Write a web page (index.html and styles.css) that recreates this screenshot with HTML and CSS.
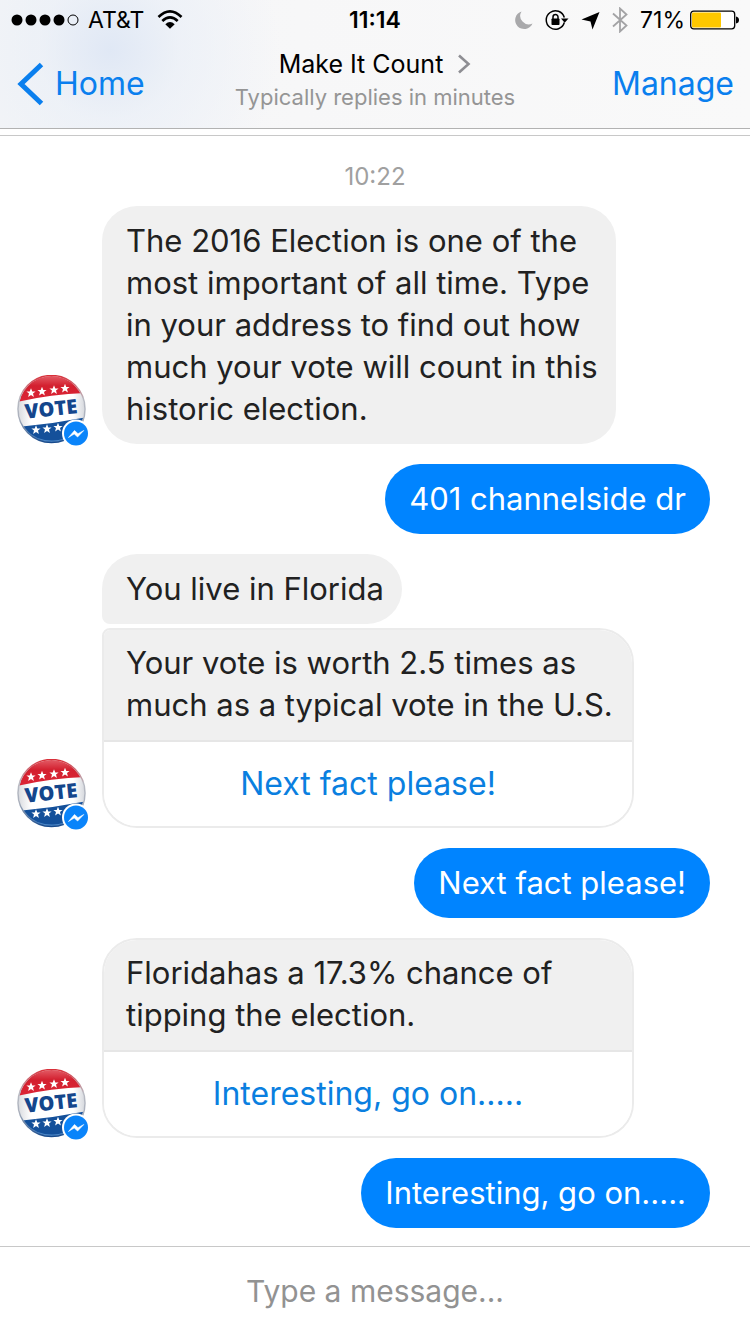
FILE: index.html
```html
<!DOCTYPE html>
<html lang="en">
<head>
<meta charset="utf-8">
<meta name="viewport" content="width=device-width, initial-scale=1">
<title>Make It Count</title>
<link rel="stylesheet" href="styles.css">
</head>
<body>
<svg class="symbols" aria-hidden="true">
  <defs>
    <linearGradient id="rim" x1="0" y1="0" x2="0" y2="1">
      <stop offset="0" stop-color="#d8303a"/>
      <stop offset=".35" stop-color="#b9bcc4"/>
      <stop offset=".65" stop-color="#a9afbb"/>
      <stop offset="1" stop-color="#174a8c"/>
    </linearGradient>
    <linearGradient id="red" x1="0" y1="0" x2="0" y2="1">
      <stop offset="0" stop-color="#e4606a"/>
      <stop offset=".4" stop-color="#d3202f"/>
      <stop offset="1" stop-color="#dc2435"/>
    </linearGradient>
    <linearGradient id="white" x1="0" y1="0" x2="1" y2="0">
      <stop offset="0" stop-color="#d5d7dc"/>
      <stop offset=".2" stop-color="#ffffff"/>
      <stop offset=".8" stop-color="#ffffff"/>
      <stop offset="1" stop-color="#cfd2d8"/>
    </linearGradient>
    <clipPath id="disc"><circle cx="34.500" cy="34" r="33"/></clipPath>
    <path id="star" d="M0-4.800 1.300-1.600 4.600-1.500 2 .6 2.900 3.900 0 2-2.900 3.900-2 .6-4.600-1.500-1.300-1.600Z"/>
    <g id="button-pin">
      <g clip-path="url(#disc)">
        <rect width="70" height="70" fill="url(#white)"/>
        <path d="M0 0H70V18Q35 19 0 27Z" fill="url(#red)"/>
        <path d="M0 52Q35 49 70 42V70H0Z" fill="#14509a"/>
        <path d="M8 55Q18 67 36 66.500 48 66 55 60" fill="none" stroke="#4b86c6" stroke-width="2"/>
        <g fill="#fff">
          <use href="#star" x="14" y="18"/>
          <use href="#star" x="25" y="16.500"/>
          <use href="#star" x="37" y="15"/>
          <use href="#star" x="48" y="13.500"/>
          <use href="#star" x="19" y="55"/>
          <use href="#star" x="30" y="54"/>
          <use href="#star" x="41" y="52.500"/>
        </g>
      </g>
      <circle cx="34.500" cy="34" r="33.500" fill="none" stroke="url(#rim)" stroke-width="1.500"/>
    </g>
    <g id="badge">
      <circle cx="59" cy="58.500" r="14" fill="#fff"/>
      <circle cx="59" cy="58.500" r="12" fill="#0a84fa"/>
      <path d="M51.500 62.500 57.500 55.500 61 58.700 66.800 55.500 60.600 62 57.200 58.900Z" fill="#fff" stroke="#fff" stroke-width=".6" stroke-linejoin="round"/>
    </g>
  </defs>
</svg>

<div class="screen">
  <header class="top">
    <div class="status">
      <div class="status-side">
        <svg class="icon" width="69" height="14" viewBox="0 0 69 14" role="img" aria-label="Signal">
          <circle cx="7" cy="7" r="5.500"/><circle cx="21" cy="7" r="5.500"/><circle cx="35" cy="7" r="5.500"/><circle cx="49" cy="7" r="5.500"/>
          <circle cx="63" cy="7" r="5" fill="none" stroke="#000"/>
        </svg>
        <span>AT&amp;T</span>
        <svg class="icon wifi" width="26" height="20" viewBox="0 0 26 20" role="img" aria-label="Wi-Fi">
          <g fill="none" stroke="#000" stroke-width="2.600">
            <path d="M1.500 7Q13-4.200 24.500 7"/>
            <path d="M5.300 11Q13 3.700 20.700 11"/>
          </g>
          <path d="M8.300 14.200Q13 10 17.700 14.200L13 18.800Z"/>
        </svg>
      </div>
      <time class="clock">11:14</time>
      <div class="status-side status-right">
        <svg class="icon" width="18" height="20" viewBox="0 0 18 20" role="img" aria-label="Do not disturb">
          <path d="M6.500 1.500A9 9 0 1 0 17.500 13.500 8.500 8.500 0 0 1 6.500 1.500Z" fill="#a9a9ab"/>
        </svg>
        <svg class="icon" width="24" height="22" viewBox="0 0 24 22" role="img" aria-label="Rotation lock">
          <path d="M19.300 13.500A9.200 9.200 0 1 1 19.300 8.500" fill="none" stroke="#000" stroke-width="1.500"/>
          <path d="M16 9.500H23.500L19.700 13.800Z"/>
          <rect x="6.500" y="9.500" width="8" height="6.500" rx=".8"/>
          <path d="M8 10V8A2.500 2.500 0 0 1 13 8V10" fill="none" stroke="#000" stroke-width="1.500"/>
        </svg>
        <svg class="icon" width="19" height="19" viewBox="0 0 19 19" role="img" aria-label="Location">
          <path d="M18.500 1 11.500 18.500 9.500 10.500 .5 8.500Z"/>
        </svg>
        <svg class="icon" width="16" height="26" viewBox="0 0 16 26" role="img" aria-label="Bluetooth">
          <path d="M1 6.500 14.500 18.500 8 24.500V1.500L14.500 7.500 1 19.500" fill="none" stroke="#a3a3a5" stroke-width="1.800"/>
        </svg>
        <span class="battery">71%
          <svg class="icon" width="50" height="20" viewBox="0 0 50 20" role="img" aria-label="Battery">
            <rect x=".7" y="1.200" width="44" height="17.600" rx="3" fill="#fff" stroke="#000" stroke-width="1.300"/>
            <rect x="2" y="2.500" width="29" height="15" rx="1" fill="#fec800"/>
            <path d="M46 6.500Q49 7 49 10T46 13.500Z"/>
          </svg>
        </span>
      </div>
    </div>
    <nav class="nav">
      <a class="nav-link" href="#home">
        <svg class="icon" width="28" height="44" viewBox="0 0 28 44" aria-hidden="true">
          <path d="M25.500 2.500 5 22 25.500 41.500" fill="none" stroke="#0a7fee" stroke-width="5"/>
        </svg>
        Home
      </a>
      <div class="heading">
        <h1 class="title">Make It Count
          <svg class="icon" width="14" height="20" viewBox="0 0 14 20" aria-hidden="true">
            <path d="M2 1.500 11.500 10 2 18.500" fill="none" stroke="#8e8e93" stroke-width="2.600"/>
          </svg>
        </h1>
        <p class="subtitle">Typically replies in minutes</p>
      </div>
      <a class="nav-link nav-end" href="#manage">Manage</a>
    </nav>
  </header>

  <main class="chat">
    <time class="stamp">10:22</time>

    <div class="row">
      <svg class="avatar" viewBox="0 0 74 72" role="img" aria-label="Make It Count">
        <use href="#button-pin"/>
        <text class="vote-text" x="34" y="41" transform="rotate(-6 34 34)" text-anchor="middle">VOTE</text>
        <use href="#badge"/>
      </svg>
      <p class="bubble">The 2016 Election is one of the most important of all time. Type in your address to find out how much your vote will count in this historic election.</p>
    </div>

    <p class="bubble sent">401 channelside dr</p>

    <div class="row">
      <svg class="avatar" viewBox="0 0 74 72" role="img" aria-label="Make It Count">
        <use href="#button-pin"/>
        <text class="vote-text" x="34" y="41" transform="rotate(-6 34 34)" text-anchor="middle">VOTE</text>
        <use href="#badge"/>
      </svg>
      <div class="stack">
        <p class="bubble first">You live in Florida</p>
        <div class="card joined">
          <p class="card-text">Your vote is worth 2.5 times as much as a typical vote in the U.S.</p>
          <button class="card-button" type="button">Next fact please!</button>
        </div>
      </div>
    </div>

    <p class="bubble sent">Next fact please!</p>

    <div class="row">
      <svg class="avatar" viewBox="0 0 74 72" role="img" aria-label="Make It Count">
        <use href="#button-pin"/>
        <text class="vote-text" x="34" y="41" transform="rotate(-6 34 34)" text-anchor="middle">VOTE</text>
        <use href="#badge"/>
      </svg>
      <div class="card">
        <p class="card-text">Floridahas a 17.3% chance of tipping the election.</p>
        <button class="card-button" type="button">Interesting, go on.....</button>
      </div>
    </div>

    <p class="bubble sent">Interesting, go on.....</p>
  </main>

  <footer class="composer">
    <input class="message" type="text" placeholder="Type a message..." aria-label="Message">
  </footer>
</div>
</body>
</html>
```

FILE: styles.css
```css
* { box-sizing: border-box; }

body {
  margin: 0;
  background: #fff;
  color: #212121;
  font-family: Inter, "Liberation Sans", sans-serif;
  font-size: 31px;
  line-height: 42px;
}

p, h1 { margin: 0; }

.symbols { position: absolute; width: 0; height: 0; }

.screen {
  min-height: 100vh;
  display: flex;
  flex-direction: column;
}

.icon { display: block; flex: none; }

/* Header */
.top {
  border-bottom: 1px solid #b2b2b2;
  background:
    radial-gradient(circle at 110px 50px, #e0e8f5 0, rgba(232, 238, 247, 0.6) 70px, rgba(247, 247, 248, 0) 170px),
    linear-gradient(90deg, #f4f5f7, #f7f7f8 40%, #f9f9f9);
}

.status {
  display: grid;
  grid-template-columns: 1fr auto 1fr;
  align-items: center;
  height: 40px;
  padding: 0 10px;
  color: #000;
  font-size: 23px;
  line-height: 40px;
}

.status-side { display: flex; align-items: center; gap: 9px; }
.wifi { margin-left: 4px; }
.status-right { justify-content: flex-end; gap: 12px; }
.clock { font-weight: 600; }
.battery { display: flex; align-items: center; gap: 5px; }

.nav {
  display: grid;
  grid-template-columns: 1fr auto 1fr;
  align-items: center;
  height: 88px;
  padding: 0 16px;
}

.nav-link {
  display: flex;
  align-items: center;
  gap: 11px;
  color: #0a7fee;
  font-size: 32px;
  text-decoration: none;
}

.nav-end { justify-content: flex-end; }

.heading { padding-bottom: 8px; text-align: center; }

.title {
  display: flex;
  justify-content: center;
  align-items: center;
  gap: 14px;
  color: #000;
  font-size: 25px;
  font-weight: 400;
  line-height: 34px;
}

.subtitle {
  color: #959595;
  font-size: 22px;
  line-height: 32px;
}

/* Conversation */
.chat {
  flex: 1;
  display: flex;
  flex-direction: column;
  gap: 20px;
  margin-top: 6px;
  padding: 26px 40px 18px 17px;
  border-top: 1px solid #c8c8c8;
}

.stamp {
  align-self: center;
  margin-bottom: -6px;
  padding-left: 23px;
  color: #a0a0a0;
  font-size: 24px;
  line-height: 30px;
}

.row {
  display: flex;
  align-items: flex-end;
  gap: 11px;
}

.avatar { flex: none; width: 74px; height: 72px; margin-bottom: -3px; }

.vote-text {
  fill: #14468c;
  font-family: "Open Sans", "Liberation Sans", sans-serif;
  font-size: 20px;
  font-weight: 800;
}

.stack {
  flex: 1;
  display: flex;
  flex-direction: column;
  align-items: flex-start;
  gap: 4px;
}

.bubble {
  max-width: 514px;
  padding: 14px 18px 14px 24px;
  border-radius: 35px;
  background: #f0f0f0;
}

.bubble.first { border-bottom-left-radius: 8px; }

.bubble.sent {
  align-self: flex-end;
  padding: 14px 24px;
  background: #0084ff;
  color: #fff;
}

.card {
  width: 100%;
  max-width: 532px;
  overflow: hidden;
  border: 2px solid #ebebeb;
  border-radius: 35px;
}

.card.joined { border-top-left-radius: 8px; }

.card-text {
  padding: 12px 16px 14px 22px;
  border-bottom: 2px solid #e6e6e6;
  background: #f0f0f0;
}

.card-button {
  display: block;
  width: 100%;
  height: 84px;
  padding: 0;
  border: 0;
  background: #fff;
  color: #0a7fe0;
  font: inherit;
  font-size: 32px;
}

/* Message entry */
.composer {
  height: 88px;
  border-top: 1px solid #c8c8c8;
}

.message {
  display: block;
  width: 100%;
  height: 100%;
  padding: 0 20px;
  border: 0;
  outline: 0;
  background: #fff;
  color: #212121;
  font: inherit;
  font-size: 30px;
  text-align: center;
}

.message::placeholder { color: #929292; opacity: 1; }
```
